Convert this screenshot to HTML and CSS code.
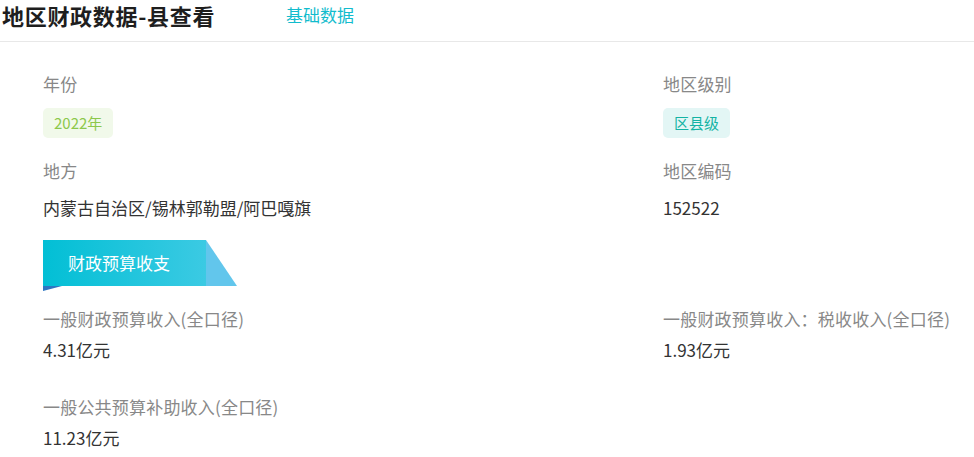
FILE: index.html
```html
<!DOCTYPE html>
<html lang="zh-CN">

<head>
    <title>地区财政数据-县查看</title>
    <link rel="stylesheet" href="styles.css">
</head>

<body>
    <div class="header">
        <h2 class="title">地区财政数据-县查看</h2>
        <a class="tab" href="#">基础数据</a>
    </div>

    <div class="content">
        <div class="grid basic">
            <div class="field">
                <div class="label">年份</div>
                <span class="tag tag-green">2022年</span>
            </div>
            <div class="field">
                <div class="label">地区级别</div>
                <span class="tag tag-cyan">区县级</span>
            </div>
            <div class="field">
                <div class="label">地方</div>
                <div class="value">内蒙古自治区/锡林郭勒盟/阿巴嘎旗</div>
            </div>
            <div class="field">
                <div class="label">地区编码</div>
                <div class="value">152522</div>
            </div>
        </div>

        <div class="banner">财政预算收支</div>
        <div class="banner-fold"></div>

        <div class="grid money">
            <div class="field">
                <div class="label">一般财政预算收入(全口径)</div>
                <div class="value">4.31亿元</div>
            </div>
            <div class="field">
                <div class="label">一般财政预算收入：税收收入(全口径)</div>
                <div class="value">1.93亿元</div>
            </div>
            <div class="field">
                <div class="label">一般公共预算补助收入(全口径)</div>
                <div class="value">11.23亿元</div>
            </div>
        </div>
    </div>
</body>

</html>
```

FILE: styles.css
```css
body { margin: 0; font-family: "Microsoft YaHei", "Noto Sans CJK SC", sans-serif; background: #fff; color: #333; }
.header { display: flex; align-items: center; height: 41px; padding-left: 2px; border-bottom: 1px solid #e8e8e8; box-sizing: content-box; }
.title { width: 284px; margin: 0 0 11px; font-size: 22px; letter-spacing: 0.7px; font-weight: bold; color: #1e1e1e; line-height: 30px; }
.tab { margin-bottom: 11px; font-size: 17px; line-height: 30px; color: #12bccd; text-decoration: none; }
.content { padding: 30px 0 0 43px; }
.grid { display: grid; grid-template-columns: 620px 1fr; }
.basic { row-gap: 21px; }
.money { row-gap: 33px; margin-top: 16px; }
.field { display: flex; flex-direction: column; align-items: flex-start; }
.label { font-size: 17px; letter-spacing: 0.2px; line-height: 24px; color: #888; white-space: nowrap; }
.value { font-size: 17px; line-height: 24px; color: #333; white-space: nowrap; }
.basic .field { gap: 12px; }
.basic .value { margin-top: 1px; }
.money .field { gap: 7px; }
.tag { display: inline-block; height: 30px; line-height: 30px; padding: 0 11px; font-size: 15px; border-radius: 5px; }
.tag-green { background: #f1f9ea; color: #8cc84b; }
.tag-cyan { background: #e3f6f5; color: #14b3a4; }
.banner { width: 194px; height: 46px; margin-top: 20px; padding-left: 25px; box-sizing: border-box; line-height: 46px; font-size: 17px; color: #fff; background: linear-gradient(90deg, #02bfd5 0%, #3bcae3 84%, #62c6ec 84%); clip-path: polygon(0 0, 163px 0, 100% 100%, 0 100%); }
.banner-fold { width: 19px; height: 5px; background: #2e76c2; clip-path: polygon(0 0, 100% 0, 0 100%); }
```
